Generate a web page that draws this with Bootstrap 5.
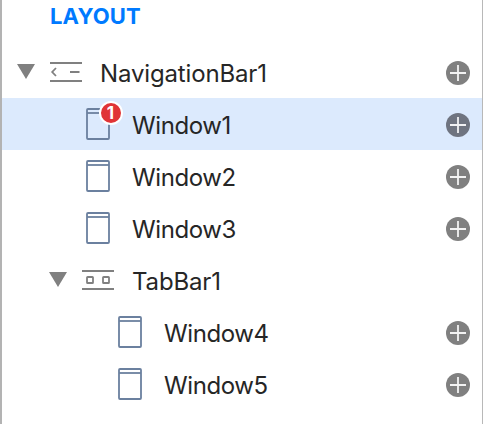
<!DOCTYPE html>
<html lang="en">
<head>
<meta charset="utf-8">
<meta name="viewport" content="width=device-width, initial-scale=1">
<title>Layout</title>
<link href="https://cdn.jsdelivr.net/npm/bootstrap@5.3.0/dist/css/bootstrap.min.css" rel="stylesheet">
<style>
body { font-family: Inter, "Liberation Sans", sans-serif; color: #262626; background: #fff; }
.outline-panel { height: 424px; border-left: 2px solid #b3b3b3; border-right: 1px solid #b8b8b8; }
.panel-title { height: 46px; padding: 2px 0 0 48px; font-size: 22px; line-height: 28px; font-weight: 700; color: #007aff; letter-spacing: .15px; }
.tree-row { height: 52px; padding-right: 12px; --ink: #808080; }
.tree-row.selected { background: #dceafd; --ink: #6f7480; }
.level-0 { padding-left: 15px; }
.level-1 { padding-left: 47px; }
.leaf-1 { padding-left: 84px; }
.leaf-2 { padding-left: 116px; }
.twist { width: 18px; height: 15px; margin-top: 18px; margin-right: 15px; }
.bar-icon { width: 32px; height: 20px; margin-top: 16px; margin-right: 18px; }
.page-icon { width: 24px; height: 32px; margin-top: 10px; margin-right: 22px; }
.page-icon svg { display: block; }
.node-name { font-size: 24px; line-height: 36px; margin-top: 10px; letter-spacing: -.15px; white-space: nowrap; }
.page-icon + .node-name { letter-spacing: -.4px; }
.add-icon { width: 24px; height: 24px; margin-top: 15px; }
.count { position: absolute; left: 13px; top: -7px; width: 24px; height: 24px; border: 2px solid #fff; border-radius: 50%; background: #e03436; color: #fff; font-size: 17px; line-height: 20px; font-weight: 700; text-align: center; text-indent: -1px; }
</style>
</head>
<body class="overflow-hidden">
<svg class="d-none">
  <symbol id="twist" viewBox="0 0 18 15"><path d="M0 0H18L9 15Z" fill="#808080"/></symbol>
  <symbol id="navbar" viewBox="0 0 32 20"><path d="M0 1H32M0 19H32M20 10H29.5M6 6L2.2 10L6 14" fill="none" stroke="#808080" stroke-width="1.8"/></symbol>
  <symbol id="tabbar" viewBox="0 0 32 20"><path d="M0 1H32M0 19H32" stroke="#808080" stroke-width="1.8"/><g fill="none" stroke="#808080" stroke-width="1.8"><rect x="5" y="7" width="6" height="6" rx=".6"/><rect x="21" y="7" width="6" height="6" rx=".6"/></g></symbol>
  <symbol id="page" viewBox="0 0 24 32"><path d="M1 5H23" stroke="#6b809f" stroke-width="1.8"/><rect x="1" y="1" width="22" height="30" rx="1" fill="none" stroke="#6b809f" stroke-width="1.8"/></symbol>
  <symbol id="add" viewBox="0 0 24 24"><circle cx="12" cy="12" r="12" fill="var(--ink)"/><path d="M4 12H20M12 4V20" stroke="#fff" stroke-opacity=".9" stroke-width="1.8"/></symbol>
</svg>
<main class="outline-panel">
  <h1 class="panel-title m-0">LAYOUT</h1>
  <div class="tree-row level-0 d-flex align-items-start"><svg class="twist"><use href="#twist"/></svg><svg class="bar-icon"><use href="#navbar"/></svg><span class="node-name">NavigationBar1</span><svg class="add-icon ms-auto"><use href="#add"/></svg></div>
  <div class="tree-row leaf-1 selected d-flex align-items-start"><span class="page-icon position-relative"><svg width="24" height="32"><use href="#page"/></svg><span class="count">1</span></span><span class="node-name">Window1</span><svg class="add-icon ms-auto"><use href="#add"/></svg></div>
  <div class="tree-row leaf-1 d-flex align-items-start"><span class="page-icon"><svg width="24" height="32"><use href="#page"/></svg></span><span class="node-name">Window2</span><svg class="add-icon ms-auto"><use href="#add"/></svg></div>
  <div class="tree-row leaf-1 d-flex align-items-start"><span class="page-icon"><svg width="24" height="32"><use href="#page"/></svg></span><span class="node-name">Window3</span><svg class="add-icon ms-auto"><use href="#add"/></svg></div>
  <div class="tree-row level-1 d-flex align-items-start"><svg class="twist"><use href="#twist"/></svg><svg class="bar-icon"><use href="#tabbar"/></svg><span class="node-name">TabBar1</span></div>
  <div class="tree-row leaf-2 d-flex align-items-start"><span class="page-icon"><svg width="24" height="32"><use href="#page"/></svg></span><span class="node-name">Window4</span><svg class="add-icon ms-auto"><use href="#add"/></svg></div>
  <div class="tree-row leaf-2 d-flex align-items-start"><span class="page-icon"><svg width="24" height="32"><use href="#page"/></svg></span><span class="node-name">Window5</span><svg class="add-icon ms-auto"><use href="#add"/></svg></div>
</main>
<script src="https://cdn.jsdelivr.net/npm/bootstrap@5.3.0/dist/js/bootstrap.bundle.min.js"></script>
</body>
</html>
